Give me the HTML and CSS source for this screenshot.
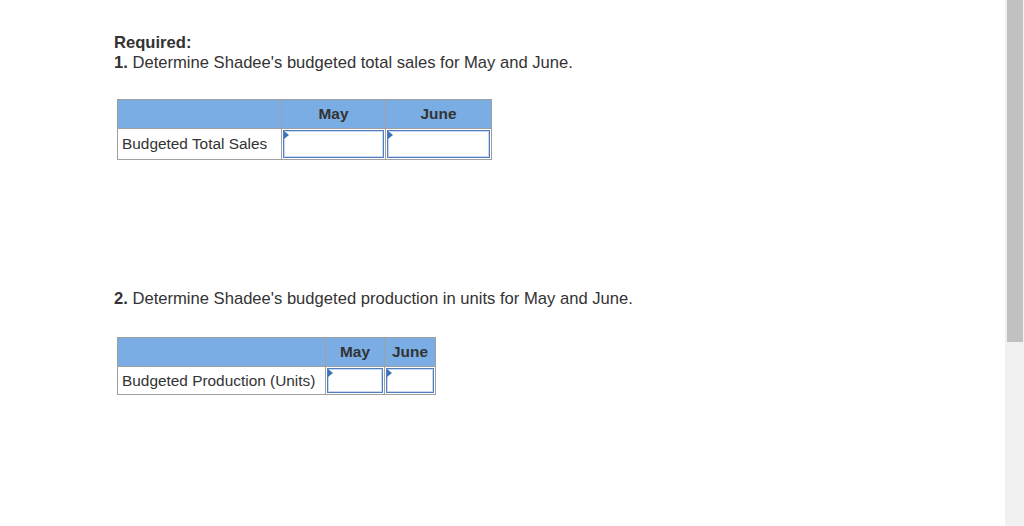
FILE: index.html
```html
<!DOCTYPE html>
<html>
<head>
<meta charset="utf-8">
<link rel="stylesheet" href="styles.css">
</head>
<body>
<div class="page">
  <main class="content">
    <div class="intro">
      <div class="req">Required:</div>
      <div class="q"><b>1.</b> Determine Shadee's budgeted total sales for May and June.</div>
    </div>
    <table class="grid grid1">
      <tr class="head"><th class="lab"></th><th class="c1">May</th><th class="c2">June</th></tr>
      <tr><td class="lab">Budgeted Total Sales</td><td class="in"><div class="box"></div></td><td class="in"><div class="box"></div></td></tr>
    </table>
    <div class="q q2"><b>2.</b> Determine Shadee's budgeted production in units for May and June.</div>
    <table class="grid grid2">
      <tr class="head"><th class="lab"></th><th class="c1">May</th><th class="c2">June</th></tr>
      <tr><td class="lab">Budgeted Production (Units)</td><td class="in"><div class="box"></div></td><td class="in"><div class="box"></div></td></tr>
    </table>
  </main>
  <div class="scrollbar"><div class="thumb"></div></div>
</div>
</body>
</html>
```
FILE: styles.css
```css
html, body { margin: 0; padding: 0; background: #fff; }
body { font-family: "Liberation Sans", Arial, sans-serif; color: #333; }
.page { display: flex; height: 526px; overflow: hidden; }
.content { flex: 1; padding: 33px 0 0 114px; }
.intro { font-size: 16.6px; line-height: 20px; }
.req { font-weight: bold; }
.q { font-size: 16.6px; line-height: 20px; }
.q b { font-weight: bold; }
.q2 { margin-top: 129px; }
.grid { border-collapse: collapse; margin-left: 3px; font-size: 15.4px; }
.grid1 { margin-top: 26px; }
.grid2 { margin-top: 28px; }
.grid th, .grid td { border: 1px solid #a0a0a0; padding: 0; }
.grid .head th { background: #7aade4; font-weight: bold; height: 28px; text-align: center; color: #333; }
.grid td.lab { background: #fff; padding: 0 4px; height: 29px; white-space: nowrap; text-align: left; }
.grid1 .lab { width: 155px; }
.grid1 .c1 { width: 103px; }
.grid1 .c2 { width: 105px; }
.grid2 th.lab { width: 207px; }
.grid2 td.lab { height: 25px; }
.grid2 .c1 { width: 58px; }
.grid2 .c2 { width: 50px; }
.grid td.in { background: #fff; padding: 1px; }
.box { position: relative; height: 26px; border: 1px solid #4f7fc0; box-shadow: inset 0 0 0 1px #c9d8ee; background: #fff; }
.grid2 .box { height: 23px; }
.box::before { content: ""; position: absolute; left: 0; top: 0; width: 0; height: 0; border-top: 4px solid transparent; border-bottom: 4px solid transparent; border-left: 5px solid #3d72b8; }
.scrollbar { width: 19px; background: #f1f1f1; display: flex; justify-content: center; }
.thumb { width: 16px; height: 342px; background: #c1c1c1; margin-left: 1px; }
```
